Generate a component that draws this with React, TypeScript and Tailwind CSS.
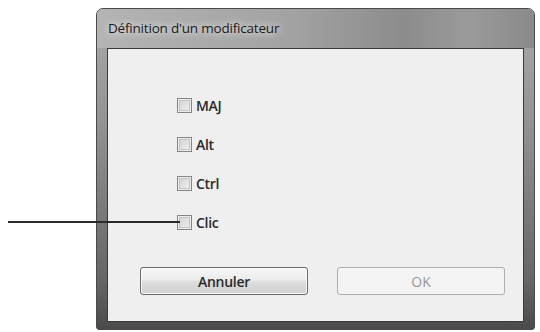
import React from 'react';

const options = ['MAJ', 'Alt', 'Ctrl', 'Clic'];

const Checkbox: React.FC<{ label: string }> = ({ label }) => (
  <label className="flex items-center gap-[4px] h-[15px]">
    <span className="w-[15px] h-[15px] border border-[#858585] bg-[linear-gradient(135deg,#cfcfcf,#f3f3f3)] shadow-[inset_0_0_0_1px_#ededed,inset_0_0_0_2px_#c4c4c4]" />
    <span className="text-[14px] leading-none text-[#2a2a2a] font-semibold tracking-[-0.3px]">{label}</span>
  </label>
);

export default function App() {
  return (
    <div
      className="relative w-[540px] h-[332px] bg-white pt-[8px] pl-[96px] overflow-hidden"
      style={{ fontFamily: '"Open Sans", "Noto Sans", sans-serif' }}
    >
      {/* fenêtre */}
      <div className="w-[439px] h-[322px] flex flex-col border border-[#4a4a4a] rounded-t-[7px] rounded-b-[3px] bg-[linear-gradient(to_bottom,#ababab_0%,#939393_35%,#666666_85%,#4a4a4a_100%)] shadow-[inset_0_1px_0_#d4d4d4]">
        <div className="h-[39px] flex items-center pl-[11px] rounded-t-[6px] bg-[linear-gradient(to_right,#b4b4b4_0%,#a2a2a2_45%,#8c8c8c_70%,#9a9a9a_85%,#8a8a8a_100%)]">
          <span className="text-[13.5px] font-medium tracking-[-0.2px] text-[#1a1a1a] [text-shadow:0_0_6px_#e6e6e6,0_0_10px_#dcdcdc]">
            Définition d'un modificateur
          </span>
        </div>
        <div className="flex-1 mx-[10px] mb-[7px] border border-[#3a3a3a] bg-[#efefef] flex flex-col">
          <div className="flex flex-col gap-[24px] pl-[69px] pt-[49px]">
            {options.map(o => (
              <Checkbox key={o} label={o} />
            ))}
          </div>
          <div className="flex gap-[29px] pl-[32px] mt-[37px]">
            <button className="w-[168px] h-[28px] rounded-[3px] border border-[#6a6a6a] bg-[linear-gradient(to_bottom,#f6f6f6_0%,#ececec_45%,#dcdcdc_55%,#d0d0d0_100%)] text-[14px] font-semibold tracking-[-0.3px] text-[#2a2a2a] shadow-[inset_0_0_0_1px_#fafafa]">
              Annuler
            </button>
            <button
              disabled
              className="w-[168px] h-[28px] rounded-[3px] border border-[#aeaeae] bg-[#f4f4f4] text-[14px] text-[#979797]"
            >
              OK
            </button>
          </div>
        </div>
      </div>
      {/* trait de repère */}
      <div className="absolute left-[8px] top-[221px] w-[172px] h-[2px] bg-[#2a2a2a]" />
    </div>
  );
}
